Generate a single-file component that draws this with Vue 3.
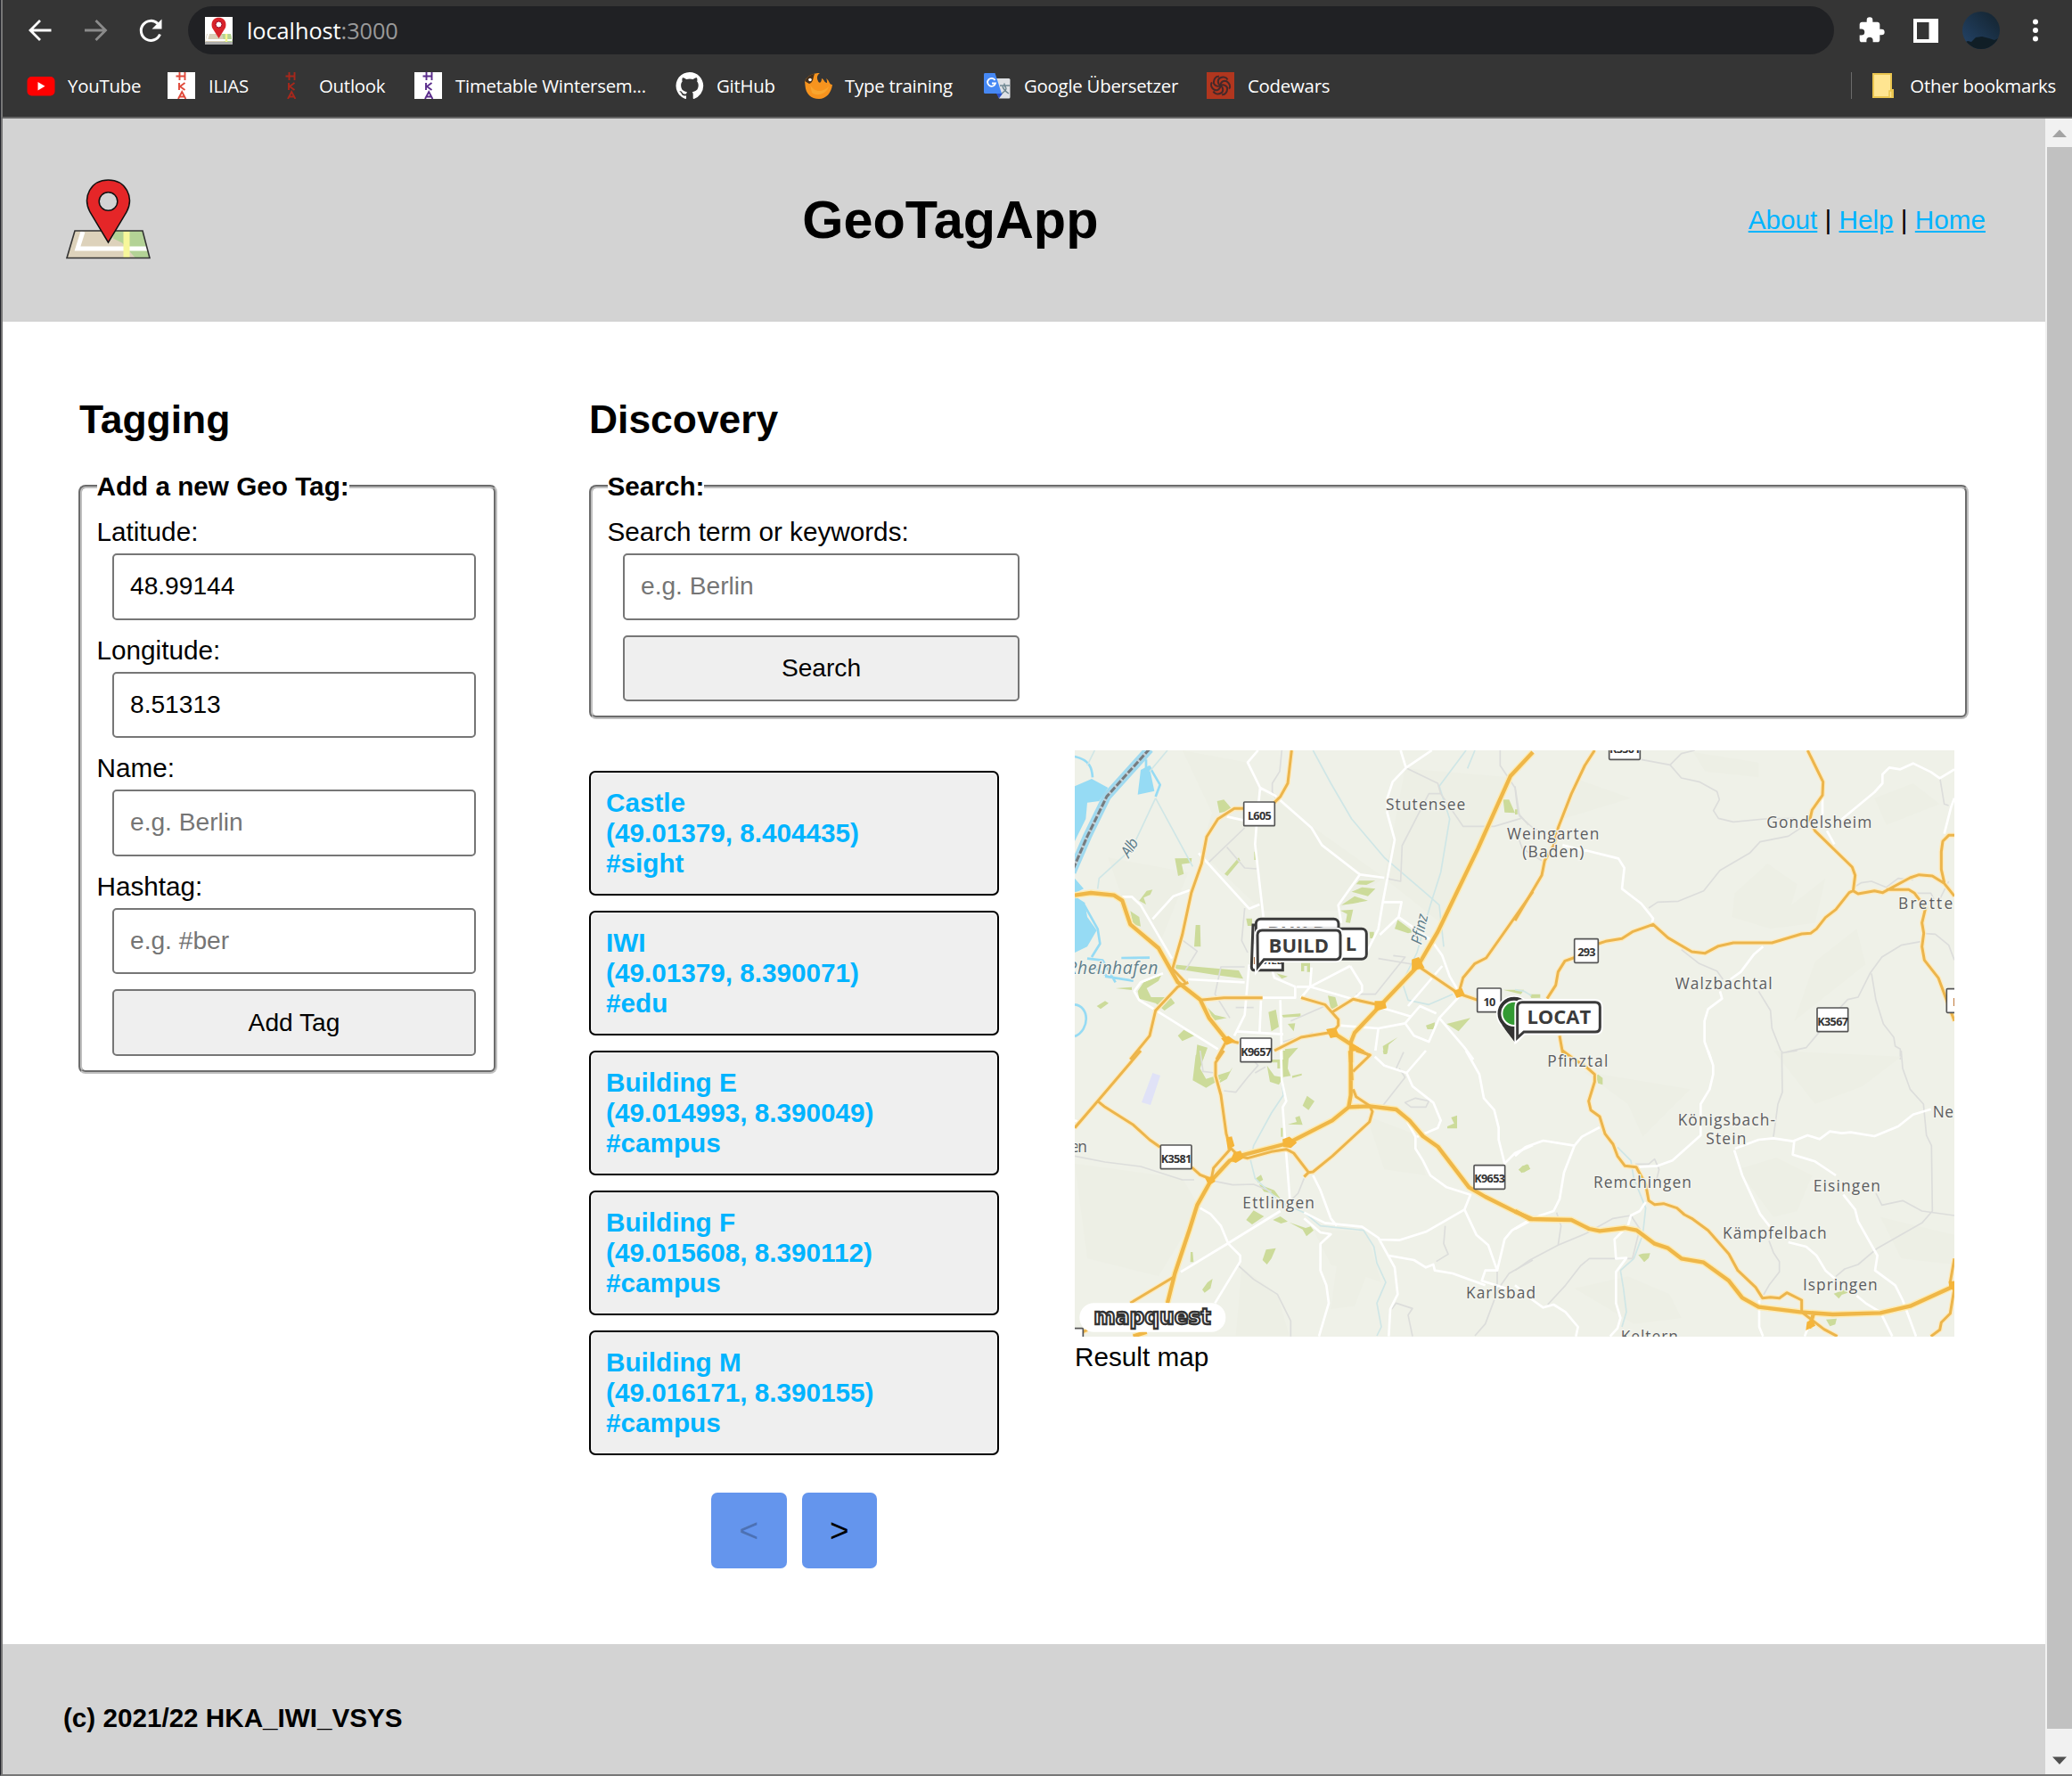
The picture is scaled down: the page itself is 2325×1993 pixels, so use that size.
<script setup>
const bookmarks = [
  { id: 'yt', label: 'YouTube', w: 158 },
  { id: 'ilias', label: 'ILIAS', w: 124 },
  { id: 'outlook', label: 'Outlook', w: 153 },
  { id: 'timetable', label: 'Timetable Wintersem...', w: 293 },
  { id: 'github', label: 'GitHub', w: 144 },
  { id: 'type', label: 'Type training', w: 201 },
  { id: 'translate', label: 'Google Übersetzer', w: 251 },
  { id: 'codewars', label: 'Codewars', w: 150 },
]

const fields = [
  { label: 'Latitude:', value: '48.99144', placeholder: '' },
  { label: 'Longitude:', value: '8.51313', placeholder: '' },
  { label: 'Name:', value: '', placeholder: 'e.g. Berlin' },
  { label: 'Hashtag:', value: '', placeholder: 'e.g. #ber' },
]

const results = [
  { name: 'Castle', pos: '(49.01379, 8.404435)', tag: '#sight' },
  { name: 'IWI', pos: '(49.01379, 8.390071)', tag: '#edu' },
  { name: 'Building E', pos: '(49.014993, 8.390049)', tag: '#campus' },
  { name: 'Building F', pos: '(49.015608, 8.390112)', tag: '#campus' },
  { name: 'Building M', pos: '(49.016171, 8.390155)', tag: '#campus' },
]

// Map geometry, one entry per quadrant; x/y is the quadrant's offset in the map.
const tiles = [
  {
    x: -18, y: -39,
    land: 'M380 39L600 80L640 170L1060 468L900 580L650 580L440 380L480 250ZM130 400L400 450L300 700L200 600ZM1130 100L1480 130L1250 620L1060 470Z',
    water: 'M18 160L75 135L130 165L100 210L60 215L55 270L18 345ZM18 470L48 505L18 520ZM18 530L52 552L60 600L92 645L60 700L18 720ZM240 105L268 90L286 176L230 188Z',
    shore: 'M18 60C70 72 76 100 78 130M258 70V110M268 92L305 155L290 195M50 560L95 640L103 690L75 735M18 895C68 900 70 980 18 1002M60 740L112 746L155 820M120 800L215 815M175 738L270 737M80 770L130 800',
    green: 'M497 210L520 205L550 240L505 250ZM355 403L412 402L410 418L378 422L385 455L366 462ZM522 455L570 400L575 410L532 462ZM260 512L280 508L272 525L250 535L258 558L235 545ZM965 490L975 478L1030 478L1000 492ZM950 515L985 500L1030 505L1005 530ZM915 560L960 530L1005 545L955 555ZM912 578L955 575L945 620L930 618L935 590ZM425 627H440L442 700H420ZM205 580L235 600L240 632L215 625ZM350 760L400 765L570 780L585 808L490 795L360 775ZM230 850L250 820L310 795L300 815L260 840L275 870L340 870L355 890L320 915L290 890L235 875ZM155 840L210 836L210 846ZM670 920L695 912L705 970L680 985ZM715 930L778 925L778 935L720 938ZM440 880L490 930L530 940L480 950L490 975L460 940ZM870 865L895 870L905 905L880 910ZM1105 610L1160 650L1140 655L1095 640ZM1270 960L1350 940L1310 985ZM1200 965L1230 955L1228 978L1205 978ZM780 755H810V785H800V765H790V783H780ZM92 900L120 883L132 890L105 910ZM697 790L735 800L715 808ZM1460 205L1480 205L1500 250L1465 248ZM595 605H615V630H600ZM365 1000L385 980L420 1000L380 1018ZM430 1030L465 1040L450 1080H425ZM1055 1035L1105 1005L1075 1030L1070 1060H1058ZM725 1045L770 1040L735 1080ZM1460 845L1530 845L1520 860ZM735 960L760 958L755 985ZM1010 650H1025V672H1012ZM622 380H630V408H622Z',
    stream: 'M820 39L880 150L950 270L1060 400L1200 520L1245 560L1260 700M1335 39L1245 160L1280 270L1250 450L1215 560L1170 720L1120 820L1140 880L1210 895L1290 860M290 200L415 430M290 200L210 370L100 470L95 505M330 39L270 110M1365 39L1340 100M85 39L60 90',
    grey: 'M715 39L708 110L683 150V180L700 210M470 415L590 300M530 365L590 435L630 438M1133 98L1240 150L1250 185L1210 185L1120 360L1115 480L1065 470M1250 185L1325 295H1430L1520 268M1450 39V90L1500 165L1510 250L1545 290M370 670L430 715L390 780M590 768H510L490 860L540 940M965 860H1030L1130 735L1090 730M590 570L580 680L600 720M620 905H560M745 950L860 900M820 990L720 1020M1040 740L1190 765',
    white: 'M635 39L600 80L642 165L690 190L815 300L850 358L978 457L1060 468M642 165L637 215M630 290L625 355L638 470L653 600M1115 39L1133 98L1088 145L1070 200V250L1095 340L1055 550L1040 640L1000 720M1133 98L1220 39M530 262L588 275M435 385L605 572L640 558M178 532H210L240 560L345 740M280 607L350 530L405 510M978 457L905 560L915 620M1055 550H1118L1108 600L1045 660M1108 600L1220 680L1255 730L1280 800L1310 850M400 810L590 820M315 790L240 820L218 850L235 880L300 920L500 1045M605 760L590 930L555 1000M650 872H760V835L690 805L680 770M815 770L810 835L945 765M765 835H810L955 877M810 835L780 872M945 765L985 830L985 850L955 877M645 880L640 990M710 880L715 1080M560 985L720 995M905 965L1040 975L1130 958L1180 900L1235 925M1130 958L1160 1000L1210 1020L1245 940L1330 1040L1360 1080M1050 905L1150 935M1140 900L1255 765M1245 940L1310 870M1040 975L1030 1050',
    minor: 'M748 39L735 150L710 195L690 215M590 235H555L500 270L462 330L445 420L410 520L380 660L347 775L390 820M205 1080L270 1000L290 915L365 835L400 820M440 880L520 872H650M780 872L860 895L905 945V965L885 990M885 920L955 877L1045 897M690 1050L780 1005L885 988M495 1080L530 1015L570 1024M1173 765L1310 858L1375 880M1310 858L1325 805L1365 757L1403 738L1560 515M950 1030L1012 1068',
    major: 'M18 527L72 519L150 527L178 545L205 625L300 705L365 820L440 878L470 940L530 1015M1560 45L1485 125L1375 370L1240 650L1173 765L1045 900L960 990L948 1020V1090M885 988L950 1030',
    knot: 'M1155 745L1175 738L1192 770L1155 778ZM1030 885L1060 885L1065 905L1030 915ZM868 980L895 975L905 1000L880 1005ZM515 1010L535 1003L555 1018L530 1028ZM1295 850L1320 843L1328 862L1305 870ZM945 1025L985 1048L950 1050Z',
  },
  {
    x: 1482, y: -39,
    land: 'M600 45L820 80L820 130L640 110ZM850 420L950 490L930 560L1045 470L1010 620L860 640L730 600L740 520ZM940 950L1180 760L1150 640L1010 750ZM1210 200L1340 150L1430 220L1250 290ZM220 140L390 200L160 270Z',
    water: '', shore: '',
    green: 'M48 860L85 860L85 872L55 873ZM0 238H8V255H0Z',
    stream: 'M0 845L30 850L55 865',
    grey: 'M425 70L522 88L560 50L605 39M522 88L560 132L620 145L680 178L688 205L668 242L685 268L735 280L840 270L940 268M0 160L15 260L60 300L100 320M10 330L25 370L90 410M450 570L480 550L550 547L635 512L690 443L790 385L825 347L920 328L970 295M1140 500L1165 485L1200 480L1250 500L1290 470L1340 475M1430 130L1445 220L1460 225M560 710L620 757L680 782L700 810M820 850L860 915L865 975L898 1058L980 1040L1090 910L1120 878L1155 870L1195 790L1235 735L1300 695L1370 682M1200 790L1215 880L1240 960L1275 1005L1280 1035L1297 1045V1080M1370 655L1415 658L1460 695L1479 745M898 1058V1080M1350 520H1400L1410 540M1430 540L1460 480',
    white: 'M235 375L348 403L368 435L360 505L425 555L465 605L460 625M1035 190V260M1095 275L1210 180L1237 150V120L1260 97L1297 103L1340 83L1400 112L1430 133L1479 103M1479 200L1468 230L1445 320M1050 310L1075 355M835 700L805 725L760 785L725 810M690 850L697 875L650 910L638 950V1020L660 1080M160 358L240 378M0 1025L20 1005',
    minor: 'M268 39L235 90L190 185L145 300L130 360L100 410L90 460L0 612M985 39L1037 145L1035 190L1000 240L992 275L1010 310L1135 432L1145 460L1138 515M108 875L137 830L145 785L168 748L205 735M280 690L305 682L360 673L395 650L465 625L515 670L595 717L640 722L685 698L735 687H865L965 657L995 655L1015 640L1045 602L1080 575L1125 518L1138 512L1155 522L1210 512L1238 518L1330 468L1360 458L1405 462L1445 487L1479 530M1250 508H1325L1345 520L1382 570L1370 620L1376 655L1370 700L1378 745L1425 805L1479 950M1479 325L1460 325L1440 345L1435 380V440L1445 485M150 1000L160 1055L170 1075',
    major: '', knot: '',
  },
  {
    x: -18, y: 1011,
    land: 'M18 380L380 430L440 530L300 760L60 700ZM580 730L700 820L740 960H560ZM900 720L1010 730L960 860L880 870ZM1000 220L1160 280L1200 420L1060 400ZM820 600L1000 610L1050 780L880 720Z',
    water: '', shore: '',
    green: 'M425 15L460 0L440 60L460 95L540 70L550 55L530 95L500 112L510 95L460 125L415 100ZM665 50L690 85L720 90L705 115L675 105ZM715 0H740L735 60L745 85L715 90ZM670 30H710V60H700V40H675ZM750 85L782 77V83L750 92ZM785 185L800 152L825 170L805 200ZM735 248L765 240L760 225L775 220L785 250ZM712 260H718V290H712ZM1272 255L1295 245L1285 225L1305 218V262H1272ZM1512 400L1540 382L1552 398L1522 412ZM628 430L645 418L652 435L635 445ZM638 450L690 470L712 500L680 480L655 475ZM595 570L620 538L655 558L615 585ZM685 570L710 558L735 575L712 582ZM740 578L795 597L812 592L822 605L798 625L785 602ZM650 705L662 670L695 665L680 700L665 720ZM408 678H415L418 712H407ZM447 805L465 780L482 768L475 800L455 815ZM1055 0H1068V12H1058Z',
    stream: 'M715 90L720 150L680 210L620 320L610 370L625 430L710 510L790 545L845 590L990 605L1025 660L1035 715L1065 780L1035 850L1050 930L1035 960',
    grey: 'M18 355L120 375L240 390L380 435H420M490 440L550 452L620 450L680 475M590 0L635 50L600 90L560 140L520 135M625 75L660 55M790 430L770 480L750 500M570 725L620 770L700 820L745 910V962M1110 60L1130 90L1055 185M1100 60L1125 5M1130 175L1165 160L1210 170L1200 190L1150 190ZM1265 590L1260 650L1275 685L1235 710M1085 870L1100 850L1155 868L1140 890L1155 962M1560 705L1480 750L1445 800L1400 920L1365 960M1440 740V790M440 0L450 70L490 75',
    white: 'M712 0L715 100L730 170L718 190L730 350L742 500M1335 0L1380 80L1395 160L1430 200L1445 260V300L1465 380L1500 345L1560 318M1200 0L1135 75L1155 120L1225 175L1250 235L1240 260L1170 290M1028 20L1060 50L1135 75M1130 225L1165 290V330L1190 370L1215 420L1270 460L1350 485L1330 535L1200 610L1110 638L1040 636M1330 535L1370 620L1410 655L1440 740L1400 740L1388 775L1470 800M1440 740L1465 635L1490 605L1545 572M710 540L540 645L375 745M440 530L475 550L510 590L535 650L575 690V710L490 850M820 420L845 470L880 565L900 590M790 545L860 580L985 593L1040 630L1095 730L1105 820L1080 870L1075 962M790 565L845 612L880 618L845 650V740L865 790L873 850L840 962M1075 690L1160 705L1200 730L1225 720L1230 740L1290 750L1400 790M18 235L30 240',
    minor: 'M240 0L95 170L18 260M95 170L120 190L215 250L270 300L305 325M412 393L440 418L475 432M520 0L492 40V85L510 150L528 280L543 330L485 395L478 432M545 330L570 355L600 362L680 340L730 332L755 345L805 410L820 408L885 355L1010 240L1020 205L1010 185L965 155L955 130M805 410L790 425M955 70L1012 15L965 0M355 760L205 850M60 940L18 960',
    major: 'M947 0V150L940 190L885 235L735 312L570 355L540 370L475 440L430 520L405 600L355 750L330 850M940 190L1010 187L1100 198L1145 235L1190 288L1240 323L1345 460L1400 492L1500 542L1560 568M215 962L260 947M945 1L950 100',
    knot: 'M720 300L740 292L762 310L745 325L722 322ZM555 345L575 340L585 360L560 375L545 370ZM530 295L545 292L553 320L535 330ZM460 430L485 425L488 440L470 450Z',
  },
  {
    x: 1482, y: 1011,
    land: 'M230 70L590 130L430 290L380 180ZM750 400L880 360L1000 420L950 540L870 560ZM870 0L1300 20L1170 120L1010 180ZM200 800L380 760L520 820L560 900L400 920ZM1230 560L1479 620V720L1300 700Z',
    water: '', shore: '',
    green: 'M272 85L280 80L295 92V115L280 110ZM12 402L25 388L45 383L50 398L30 410ZM415 688L430 683L455 682L450 698L435 712ZM1073 818L1110 805L1120 815L1100 822L1090 835ZM1047 905L1083 902L1078 922L1060 928Z',
    stream: 'M345 325L390 370L400 430L440 530L430 620L400 700L355 740L365 800L375 880L360 930',
    grey: 'M0 740L50 705L145 655L240 615L330 565L390 555L420 600L395 700M145 655L155 590L140 545M395 700H250L220 725L170 790L110 855M405 382H450L470 365L485 400L475 440M898 0L900 140L885 180L870 290M898 8L950 0M1300 0L1305 60L1330 130L1375 180L1385 285L1402 320L1405 540L1370 580L1220 665L1155 720L1110 735L1080 760M1215 480L1235 520L1305 505L1370 540L1479 555M855 640L870 680L890 710V745L855 790L835 825',
    white: 'M650 0L667 50V80L655 130L625 180V285L530 370L480 388L410 392M0 355L35 325L95 303L200 320L225 290L285 258M200 320L165 410L150 500L130 540L85 555L0 600M740 330L820 300L870 295L935 305L985 285L1025 298L1060 272L1100 278L1130 275L1210 288L1290 255L1340 215L1400 197M738 335L765 420L825 550L860 595M920 645L980 660L1015 690L1045 740L1080 770M940 305L935 350L1010 373L1080 420M1105 485L1145 535L1155 575L1220 690L1212 740L1280 790L1305 840L1350 962M1150 825L1180 850L1230 880L1270 962M440 510L420 540L390 555L380 590L335 635L340 700L375 698L340 745V850L355 900L345 935L320 962M0 790L60 840L95 865L130 855L170 880L212 930L205 962M822 840V930L835 962M985 935L975 962',
    minor: 'M160 0L200 30L240 55L268 80V105L248 170L255 200L285 222L303 280L330 315L345 355L370 388L408 392L440 450L450 505L470 518L500 515L545 530L570 552L595 565L650 605L720 685L750 740L810 797L833 833L860 830L890 833L915 815L965 840V880L1040 938L1085 962M1479 700L1465 780M1479 800L1465 885L1435 915L1430 940L1400 962',
    major: 'M0 540L50 567L190 570L250 600L285 607L370 597L410 605L470 650L515 665L560 700L635 713L720 775L765 832L820 863L960 880L1070 888L1230 883L1330 860L1479 792M1005 885L990 935',
    knot: 'M985 915L1000 908L1008 925L982 938ZM1462 780L1479 778V805L1465 800Z',
  },
]

// Place names: quadrant, x, baseline, text length, text
const places = [
  [0, 1065, 241, 268, 'Stutensee'],
  [1, -27, 338, 310, 'Weingarten'],
  [1, 25, 399, 207, '(Baden)'],
  [1, 847, 300, 354, 'Gondelsheim'],
  [1, 1290, 573, 222, 'Bretten'],
  [1, 539, 843, 327, 'Walzbachtal'],
  [3, 109, 53, 204, 'Pfinztal'],
  [3, 548, 253, 328, 'Königsbach-'],
  [3, 643, 315, 135, 'Stein'],
  [3, 1406, 226, 70, 'Ne'],
  [3, 264, 463, 330, 'Remchingen'],
  [3, 1004, 474, 226, 'Eisingen'],
  [3, 699, 633, 350, 'Kämpfelbach'],
  [3, 969, 806, 251, 'Ispringen'],
  [3, 356, 980, 193, 'Keltern'],
  [2, 583, 532, 242, 'Ettlingen'],
  [2, 1335, 835, 234, 'Karlsbad'],
  [2, 4, 341, 56, 'en'],
]

// Road shields: quadrant, x, y, width, text
const shields = [
  [0, 587, 213, 104, 'L605'],
  [0, 1373, 840, 80, '10'],
  [0, 576, 1008, 104, 'K9657'],
  [1, 317, -10, 104, 'K3501'],
  [1, 200, 674, 80, '293'],
  [1, 1017, 906, 104, 'K3567'],
  [1, 1453, 842, 104, 'K35'],
  [2, 307, 318, 104, 'K3581'],
  [2, 1362, 386, 104, 'K9653'],
  [2, -58, 935, 104, ''],
]
const at = (q) => `translate(${tiles[q].x} ${tiles[q].y})`
</script>

<template>
  <div class="window">
    <div class="chrome">
      <div class="toolbar">
        <svg class="nav-icon" viewBox="0 0 32 32"><path d="M28.500 16H5M16 5L5 16l11 11" fill="none" stroke="#fff" stroke-width="2.800" /></svg>
        <svg class="nav-icon" viewBox="0 0 32 32"><path d="M4 16h23.500M16.500 5L27.500 16 16.500 27" fill="none" stroke="#8b8b8b" stroke-width="2.800" /></svg>
        <svg class="nav-icon" viewBox="0 0 32 32"><path d="M26.500 20.500A11 11 0 1 1 24 8.500" fill="none" stroke="#fff" stroke-width="3" /><path d="M28.500 3.500v11h-11z" fill="#fff" /></svg>
        <div class="address">
          <svg class="favicon" viewBox="0 0 31 31">
            <rect width="31" height="31" fill="#fff" />
            <path d="M2 19h27l2 10H0z" fill="#d9cfb8" /><path d="M19 19h10l2 10h-9z" fill="#b4d494" />
            <path d="M4 19l-2 7h28" stroke="#fff" stroke-width="2" fill="none" /><path d="M24 19v10" stroke="#f4f58e" stroke-width="2.500" /><path d="M0 29.500h31" stroke="#aaa" stroke-width="3" />
            <path d="M15.500 24L8 12C4-3 27-3 23 12z" fill="#d8232a" /><circle cx="15.500" cy="8.500" r="3.500" fill="#fff" stroke="#902" />
          </svg>
          <span class="host">localhost<span class="port">:3000</span></span>
        </div>
        <svg class="puzzle" viewBox="0 0 24 24"><path fill="#fff" d="M20.500 11H19V7c0-1.100-.9-2-2-2h-4V3.500a2.500 2.500 0 0 0-5 0V5H4c-1.100 0-2 .9-2 2v3.800h1.500a2.700 2.700 0 0 1 0 5.400H2V20c0 1.100.9 2 2 2h3.800v-1.500a2.700 2.700 0 0 1 5.400 0V22H17c1.100 0 2-.9 2-2v-4h1.500a2.500 2.500 0 0 0 0-5z" /></svg>
        <svg class="panel" viewBox="0 0 28 27"><path fill="#fff" fill-rule="evenodd" d="M0 0h28v27H0zM4 4v19h13.500V4z" /></svg>
        <svg class="avatar" viewBox="0 0 42 42">
          <defs><linearGradient id="sky" x1="0" y1="1" x2="1" y2="0"><stop offset="0" stop-color="#24456b" /><stop offset="1" stop-color="#13222c" /></linearGradient><clipPath id="disc"><circle cx="21" cy="21" r="21" /></clipPath></defs>
          <g clip-path="url(#disc)"><rect width="42" height="42" fill="url(#sky)" /><path d="M0 36l6-3 4 1 5-5 7-1 8 2 6 2 6-3v14H0z" fill="#101e26" /></g>
        </svg>
        <svg class="dots" viewBox="0 0 8 26"><circle cx="4" cy="3.500" r="3" fill="#fff" /><circle cx="4" cy="13" r="3" fill="#fff" /><circle cx="4" cy="22.500" r="3" fill="#fff" /></svg>
      </div>
      <div class="bookmarks">
        <div v-for="b in bookmarks" :key="b.id" class="bookmark" :style="{ width: b.w + 'px' }">
          <svg class="mark" viewBox="0 0 32 30">
            <template v-if="b.id === 'yt'"><rect x=".5" y="5" width="31" height="21.500" rx="5" fill="#f00" /><path d="M12.500 11l8 4.700-8 4.700z" fill="#fff" /></template>
            <template v-else-if="b.id === 'ilias' || b.id === 'timetable' || b.id === 'outlook'">
              <rect v-if="b.id !== 'outlook'" width="31" height="30" fill="#fff" />
              <g :transform="b.id === 'outlook' ? 'translate(-1 0)' : ''" fill="none" stroke-width="1.900" :stroke="{ ilias: '#e0493a', outlook: '#a8281c', timetable: '#5b2d8c' }[b.id]">
                <path d="M13.500 0v9M19.500 0v9M9.500 4.500h10M13 12v8M19.500 12l-5.500 4 5.500 4M12 30l4.200-8 4.200 8M13.500 27.500h5.500" />
              </g>
            </template>
            <path v-else-if="b.id === 'github'" fill="#fff" transform="translate(.5 0) scale(1.920)" d="M8 0C3.580 0 0 3.580 0 8c0 3.540 2.290 6.530 5.470 7.590.4.070.55-.17.55-.38 0-.19-.01-.82-.01-1.490-2.010.37-2.530-.49-2.690-.94-.09-.23-.48-.94-.82-1.130-.28-.15-.68-.52-.01-.53.63-.01 1.080.58 1.230.82.72 1.210 1.870.87 2.330.66.070-.52.28-.87.51-1.070-1.780-.2-3.640-.89-3.640-3.950 0-.87.31-1.590.82-2.150-.08-.2-.36-1.020.08-2.120 0 0 .67-.21 2.200.82a7.600 7.600 0 0 1 4 0c1.530-1.040 2.200-.82 2.200-.82.44 1.100.16 1.920.08 2.120.51.56.82 1.270.82 2.150 0 3.070-1.870 3.750-3.650 3.950.29.25.54.73.54 1.480 0 1.070-.01 1.930-.01 2.200 0 .21.15.46.55.38A8.010 8.010 0 0 0 16 8c0-4.420-3.580-8-8-8z" />
            <template v-else-if="b.id === 'type'">
              <path d="M1 10C5 3 11 1 18 1c-3 2-4 5-2 9 1 3 4 2 4-3 3 1 3 5 6 5 0-2 0-3-1-5 4 2 3 7 7 7-1 9-7 16-15 16C8 30 2 24 1.500 15z" fill="#f7941e" />
              <path d="M7 14c4 8 13 10 21 2-2 8-13 12-19 7" fill="#f9a62f" /><path d="M1 10C5 3 10 2 12 2c-2 5-1 9-6 11z" fill="#46301c" /><circle cx="7" cy="8.500" r="1.800" fill="#fff" />
            </template>
            <template v-else-if="b.id === 'translate'">
              <path d="M12 7h17q1.500 0 1.500 1.500V28q0 1.500-1.500 1.500H18z" fill="#dfe1e5" /><path d="M15 24h7l-4 5.500z" fill="#2b50c8" /><path d="M2 1h11.500L21 24H2.500Q1 24 1 22.500V2.500Q1 1 2 1z" fill="#4688f4" />
              <path d="M13.500 9A4.500 4.500 0 1 0 14 12.500h-4" fill="none" stroke="#fff" stroke-width="1.800" /><path d="M19 15h11M24 12.500V15c4 4 1 6-3 9M22 16c1 4 4 6 7 8" fill="none" stroke="#6f8791" stroke-width="1.500" />
            </template>
            <template v-else>
              <rect width="31" height="30" fill="#b1361e" />
              <g fill="none" stroke="#43292a" stroke-width="2">
                <path v-for="n in 6" :key="n" :transform="`rotate(${n * 60} 15.500 15)`" d="M15.500 15C12 13 12 8 15 6.500S22 5 23.500 8.500" />
              </g>
            </template>
          </svg>
          <span>{{ b.label }}</span>
        </div>
        <div class="other">
          <svg class="folder" viewBox="0 0 24 28"><path d="M1 1h20v18h2v8H1z" fill="#ffe591" stroke="#eac54f" stroke-width="2" /><path d="M19 27v-7h3v7" fill="#ffe591" stroke="#eac54f" stroke-width="1.500" /></svg>
          <span>Other bookmarks</span>
        </div>
      </div>
    </div>

    <div class="viewport">
      <div class="page">
        <header class="header">
          <svg class="logo" viewBox="0 0 98 92">
            <path d="M13 59h76l8 30.500H4z" fill="#ddd2bb" />
            <path d="M57 59h32l8 30.500H81l-8-9-7-8-10-5z" fill="#b3d296" />
            <path d="M22 60l-6 19h78" fill="none" stroke="#fff" stroke-width="5" /><path d="M71 60v29" stroke="#f7f79b" stroke-width="7" />
            <path d="M13 59h76l8 30.500H4z" fill="none" stroke="#333" stroke-width="1.600" />
            <path d="M50.500 72L30 38C21 21 31 2 50.500 2S80 21 71 38z" fill="#e52628" stroke="#111" stroke-width="1.500" />
            <circle cx="50.500" cy="26" r="10.300" fill="#d3d3d3" stroke="#111" stroke-width="1.500" />
          </svg>
          <h1>GeoTagApp</h1>
          <nav><a>About</a> | <a>Help</a> | <a>Home</a></nav>
        </header>

        <main class="main">
          <section class="tagging">
            <h2>Tagging</h2>
            <fieldset>
              <legend>Add a new Geo Tag:</legend>
              <template v-for="f in fields" :key="f.label">
                <label>{{ f.label }}</label>
                <input type="text" :value="f.value" :placeholder="f.placeholder" />
              </template>
              <button type="button">Add Tag</button>
            </fieldset>
          </section>

          <section class="discovery">
            <h2>Discovery</h2>
            <fieldset>
              <legend>Search:</legend>
              <label>Search term or keywords:</label>
              <input type="text" placeholder="e.g. Berlin" />
              <button type="button">Search</button>
            </fieldset>
            <div class="results">
              <div class="list">
                <ul>
                  <li v-for="r in results" :key="r.name">{{ r.name }}<br />{{ r.pos }}<br />{{ r.tag }}</li>
                </ul>
                <div class="pager">
                  <button type="button" disabled>&lt;</button>
                  <button type="button">&gt;</button>
                </div>
              </div>
              <figure>
                <svg class="map" viewBox="0 0 2961 1974">
                  <rect width="2961" height="1974" fill="#eff1e8" />
                  <g v-for="(t, i) in tiles" :key="'a' + i" :transform="at(i)">
                    <path :d="t.land" fill="#edefe5" />
                    <path :d="t.water" fill="#96dbf4" />
                    <path :d="t.shore" class="line" stroke="#96dbf4" stroke-width="8" />
                    <path :d="t.green" fill="#ccdb9a" />
                    <path :d="t.stream" class="line" stroke="#cfe6e6" stroke-width="5" />
                    <path :d="t.grey" class="line" stroke="#dcdddb" stroke-width="5" />
                  </g>
                  <path d="M262 1086L288 1095L255 1194L225 1185Z" fill="#e0e2f7" />
                  <path d="M252 -5L108 155L42 290L-10 410" class="line" stroke="#a0daf0" stroke-width="30" />
                  <path d="M252 -5L108 155L42 290L-10 410" class="line" stroke="#c5cdd2" stroke-width="10" />
                  <path d="M252 -5L108 155L42 290L-10 410" fill="none" stroke="#757c80" stroke-width="9" stroke-dasharray="22 7" />
                  <g v-for="(t, i) in tiles" :key="'b' + i" :transform="at(i)">
                    <path :d="t.white" class="line" stroke="#fff" stroke-width="8" />
                  </g>
                  <g v-for="(t, i) in tiles" :key="'c' + i" :transform="at(i)">
                    <path :d="t.minor" class="line" stroke="#fdebc0" stroke-width="17" />
                    <path :d="t.major" class="line" stroke="#fdebb4" stroke-width="22" />
                  </g>
                  <g v-for="(t, i) in tiles" :key="'d' + i" :transform="at(i)">
                    <path :d="t.minor" class="line" stroke="#ecb54c" stroke-width="9" />
                    <path :d="t.major" class="line" stroke="#efb748" stroke-width="13" />
                    <path :d="t.knot" fill="#f5b53a" stroke="#f5b53a" stroke-width="5" />
                  </g>
                  <g class="place">
                    <text v-for="p in places" :key="p[4]" :transform="at(p[0])" :x="p[1]" :y="p[2]" :textLength="p[3]">{{ p[4] }}</text>
                    <text class="river" transform="translate(182 364) rotate(-58)" textLength="65">Alb</text>
                    <text class="river" transform="translate(1166 656) rotate(-77)" textLength="104">Pfinz</text>
                    <text class="river large" x="-26" y="753" textLength="306">Rheinhafen</text>
                  </g>
                  <g v-for="(s, i) in shields" :key="'s' + i" :transform="at(s[0])" class="shield">
                    <rect :x="s[1]" :y="s[2]" :width="s[3]" height="80" rx="3" />
                    <text :x="s[1] + s[3] / 2" :y="s[2] + 59">{{ s[4] }}</text>
                  </g>
                  <g class="pin">
                    <path d="M1430 915L1481 982L1525 915Z" fill="#333" />
                    <circle cx="1479" cy="886" r="58" fill="#333" stroke="#fff" stroke-width="5" />
                    <path d="M1438 925L1481 980L1515 925Z" fill="#333" />
                    <circle cx="1479" cy="886" r="41" fill="#339a33" stroke="#fff" stroke-width="6" />
                    <path d="M600 588H700V740H605Q595 740 595 728Z" />
                    <text x="653" y="721" class="small">BUILD</text>
                    <rect x="610" y="568" width="278" height="100" rx="16" />
                    <text x="749" y="640">BUILD</text>
                    <rect x="750" y="601" width="232" height="102" rx="16" />
                    <text x="930" y="675">L</text>
                    <path class="halo" d="M615 622Q615 606 631 606H880Q894 606 894 622V688Q894 704 880 704H637L616 730Z" />
                    <path d="M615 622Q615 606 631 606H880Q894 606 894 622V688Q894 704 880 704H637L616 730Z" />
                    <text x="754" y="680">BUILD</text>
                    <path class="halo" d="M1490 864Q1490 848 1506 848H1752Q1768 848 1768 864V932Q1768 948 1752 948H1512L1490 968Z" />
                    <path d="M1490 864Q1490 848 1506 848H1752Q1768 848 1768 864V932Q1768 948 1752 948H1512L1490 968Z" />
                    <text x="1630" y="922">LOCAT</text>
                  </g>
                  <rect x="16" y="1861" width="492" height="97" rx="48" fill="#fff" />
                  <text class="brand" x="64" y="1932" textLength="394" lengthAdjust="spacingAndGlyphs">mapquest</text>
                </svg>
                <figcaption>Result map</figcaption>
              </figure>
            </div>
          </section>
        </main>

        <footer class="footer">(c) 2021/22 HKA_IWI_VSYS</footer>
      </div>
      <div class="scrollbar">
        <svg viewBox="0 0 30 32"><path d="M8 21L16 12.500 24 21z" fill="#a3a3a3" /></svg>
        <div class="thumb"></div>
        <svg viewBox="0 0 30 32"><path d="M8 12.500L16 21 24 12.500z" fill="#505050" /></svg>
      </div>
    </div>
  </div>
</template>

<style>
body { margin: 0; overflow: hidden; }
</style>

<style scoped>
* { box-sizing: border-box; }
.window {
  width: 2325px; height: 1993px; display: flex; flex-direction: column;
  border-bottom: 2px solid #777; border-left: 1px solid #23242b; background: #fff; color: #000;
  font: 29.700px/34px "Liberation Sans", Arial, sans-serif;
}
.chrome {
  height: 133px; background: #353535; border-bottom: 2px solid #666; border-left: 2px solid #777;
  color: #fff; font-family: "Open Sans", "Noto Sans", sans-serif;
}
.toolbar { height: 68px; display: flex; align-items: center; padding-left: 26px; }
.nav-icon { width: 32px; height: 32px; margin-right: 30px; flex: none; }
.nav-icon:nth-child(3) { margin-right: 26px; }
.address {
  width: 1847px; height: 54px; border-radius: 27px; background: #202124; flex: none;
  display: flex; align-items: center; padding-left: 19px;
}
.favicon { width: 31px; height: 31px; margin-right: 16px; }
.host { font-size: 25.300px; letter-spacing: -0.05px; }
.port { color: #9a9a9a; }
.puzzle { width: 32px; height: 32px; margin-left: 26px; flex: none; }
.panel { width: 28px; height: 27px; margin-left: 31px; flex: none; }
.avatar { width: 42px; height: 42px; margin-left: 27px; flex: none; }
.dots { width: 8px; height: 26px; margin-left: 36px; flex: none; }
.bookmarks { display: flex; align-items: center; height: 56px; padding-left: 27px; font-size: 20.400px; letter-spacing: -0.25px; white-space: nowrap; }
.bookmark { display: flex; align-items: center; flex: none; }
.mark { width: 32px; height: 30px; margin-right: 14px; flex: none; }
.other { margin-left: auto; display: flex; align-items: center; height: 30px; padding-left: 23px; margin-right: 18px; border-left: 1px solid #6b6b6b; }
.folder { width: 24px; height: 28px; margin-right: 18px; }

.viewport { flex: 1; display: flex; border-left: 2px solid #777; min-height: 0; }
.page { width: 2292px; display: flex; flex-direction: column; }
.header { height: 228px; background: #d3d3d3; display: flex; align-items: center; justify-content: space-between; padding: 0 67px 0 68px; }
.logo { width: 98px; height: 92px; margin-top: -2px; }
h1 { margin: 0 0 0 2px; font-size: 59.400px; line-height: 68px; }
a { color: #00b4ff; text-decoration: underline; }
.main { height: 1484px; display: flex; gap: 103px; padding: 84px 0 0 85px; }
.tagging { width: 470px; }
.tagging h2 { padding-left: 1px; }
.discovery { width: 1548px; }
h2 { margin: 0 0 33px; font-size: 44.400px; line-height: 51px; }
fieldset { margin: 0; padding: 17px 16px 16px 16.500px; border: 4px groove #c0c0c0; border-radius: 8px; }
legend { padding: 0; font-weight: bold; }
label { display: block; height: 34px; }
input, fieldset button {
  display: block; width: 408px; height: 74.600px; margin: 7px 0 17px 17.500px; padding: 0 18px;
  border: 2px solid #767676; border-radius: 5px; background: #fff; color: #000;
  font: 28.150px "Liberation Sans", Arial, sans-serif;
}
input::placeholder { color: #757575; opacity: 1; }
fieldset button { background: #efefef; margin: 0 0 0 17.500px; text-align: center; }
.discovery input, .discovery fieldset button { width: 445px; }
.results { display: flex; padding-top: 35px; }
.list { width: 460px; margin: 23px 85px 0 0; }
ul { list-style: none; margin: 0; padding: 0; display: flex; flex-direction: column; gap: 17px; }
li { height: 140px; padding: 17px; border: 2px solid #000; border-radius: 7px; background: #efefef; color: #00b4ff; font-weight: bold; }
.pager { display: flex; justify-content: center; gap: 17px; margin-top: 42px; }
.pager button { width: 84.500px; height: 85px; padding: 0; border: 0; border-radius: 7px; background: #6495ed; color: #000; font: 37px "Liberation Sans", Arial, sans-serif; }
.pager button:disabled { color: #4c71b4; }
figure { margin: 0; width: 987px; }
.map { display: block; width: 987px; height: 658px; }
figcaption { margin-top: 6px; }
.footer { flex: 1; background: #d3d3d3; padding: 66px 0 0 68px; font-weight: bold; font-size: 29.650px; }
.scrollbar { width: 30px; background: #f1f1f1; display: flex; flex-direction: column; }
.scrollbar svg { display: block; width: 30px; height: 32px; flex: none; }
.thumb { height: 1775px; margin-left: 2px; background: #c1c1c1; }
.scrollbar svg:last-child { margin-top: auto; }

.line { fill: none; stroke-linecap: butt; stroke-linejoin: round; }
.place text { font: 500 52px "Open Sans", "Noto Sans", sans-serif; fill: #5c5d60; stroke: #f3f4ee; stroke-width: 8px; paint-order: stroke; }
.place .river { font-style: italic; fill: #5f7f8b; }
.place .large { font-size: 58px; }
.shield rect { fill: #fff; stroke: #555; stroke-width: 5px; }
.shield text { font: bold 38px "Open Sans", sans-serif; fill: #333; text-anchor: middle; letter-spacing: -2px; }
.pin rect, .pin path:not([fill]) { fill: #fff; stroke: #3b3b3b; stroke-width: 9px; }
.pin path.halo:not([fill]) { stroke: #fff; stroke-width: 20px; }
.pin text { font: bold 66px "Open Sans", sans-serif; fill: #3b3b3b; text-anchor: middle; }
.pin text.small { font-size: 34px; }
.brand { font: bold 76px "DejaVu Sans", sans-serif; fill: #fff; stroke: #333; stroke-width: 7px; }
</style>
